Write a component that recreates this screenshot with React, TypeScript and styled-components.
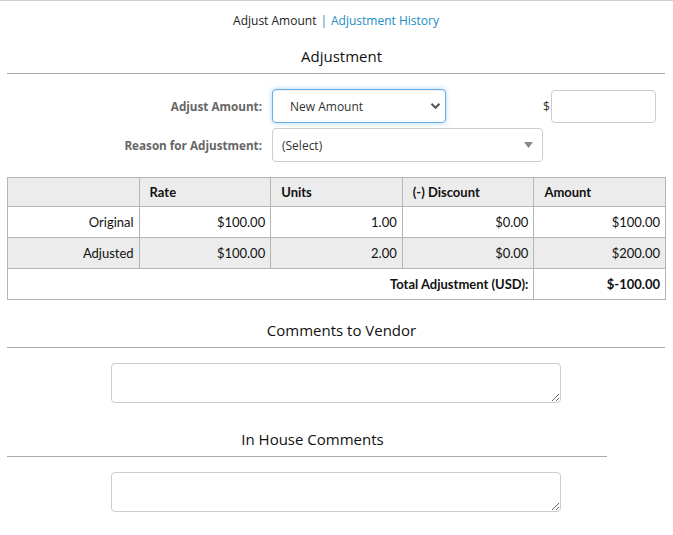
import React from "react";
import styled, { createGlobalStyle } from "styled-components";

const Global = createGlobalStyle`
  html, body { margin: 0; padding: 0; background: #fff; }
  body { font-family: "Open Sans", "Noto Sans", sans-serif; color: #222; }
  * { box-sizing: border-box; }
`;

const Page = styled.div`
  border-top: 1px solid #d0d0d0;
  padding: 0 8px 20px 7px;
`;

const Nav = styled.div`
  padding-top: 10px;
  line-height: 20px;
  font-size: 12px;
  text-align: center;
  color: #222;
`;

const NavLink = styled.a<{ $active?: boolean }>`
  color: ${(p) => (p.$active ? "#222" : "#1b8dc4")};
  text-decoration: none;
`;

const Sep = styled.span`
  color: #1b8dc4;
  margin: 0 4px;
`;

const SectionHeading = styled.div<{ $width?: number; $top: number }>`
  width: ${(p) => (p.$width ? `${p.$width}px` : "100%")};
  margin-top: ${(p) => p.$top}px;
  padding: 0 0 6px 11px;
  border-bottom: 1px solid #aaa;
  text-align: center;
  font-size: 15px;
  line-height: 22px;
  color: #111;
`;

const Form = styled.div`
  margin-top: 15px;
  display: grid;
  grid-template-columns: 255px 1fr;
  column-gap: 10px;
  row-gap: 5px;
  align-items: center;
`;

const Label = styled.label`
  text-align: right;
  font-size: 11.7px;
  font-weight: 700;
  color: #666;
`;

const Controls = styled.div`
  display: flex;
  align-items: center;
`;

const SelectWrap = styled.div<{ $width: number }>`
  position: relative;
  width: ${(p) => p.$width}px;
  height: 34px;
`;

const NativeSelect = styled.select<{ $focused?: boolean; $pad: number }>`
  appearance: none;
  -webkit-appearance: none;
  width: 100%;
  height: 100%;
  padding: 0 24px 0 ${(p) => p.$pad}px;
  font-family: "Open Sans", "Noto Sans", sans-serif;
  font-size: 12px;
  color: #333;
  background: #fff;
  border-radius: 4px;
  outline: none;
  border: 1px solid ${(p) => (p.$focused ? "#66afe9" : "#ccc")};
  box-shadow: ${(p) =>
    p.$focused
      ? "inset 0 1px 1px rgba(0,0,0,.075), 0 0 5px rgba(102,175,233,.55)"
      : "none"};
`;

const Arrow = styled.span<{ $right: number }>`
  position: absolute;
  right: ${(p) => p.$right}px;
  top: 50%;
  transform: translateY(-50%);
  display: flex;
  pointer-events: none;
`;

const Dollar = styled.span`
  margin-left: 97px;
  font-size: 12px;
  color: #333;
  width: 8px;
`;

const AmountInput = styled.input`
  width: 105px;
  height: 33px;
  border: 1px solid #ccc;
  border-radius: 4px;
  outline: none;
`;

const Table = styled.table`
  margin-top: 15px;
  width: 659px;
  border-collapse: collapse;
  table-layout: fixed;
  font-family: Lato, "Carlito", sans-serif;
  font-size: 13px;
  color: #111;
`;

const Th = styled.th`
  height: 29px;
  border: 1px solid #b5b5b5;
  background: #ececec;
  text-align: left;
  padding: 0 10px 1px;
  font-weight: 700;
`;

const Tr = styled.tr<{ $shaded?: boolean }>`
  background: ${(p) => (p.$shaded ? "#ececec" : "#fff")};
`;

const Td = styled.td<{ $bold?: boolean }>`
  height: 31px;
  border: 1px solid #b5b5b5;
  text-align: right;
  padding: 0 5px;
  font-weight: ${(p) => (p.$bold ? 700 : 400)};
`;

const Center = styled.div`
  display: flex;
  justify-content: center;
  width: 657px;
`;

const TextArea = styled.textarea`
  margin-top: 15px;
  width: 450px;
  height: 40px;
  border: 1px solid #ccc;
  border-radius: 4px;
  outline: none;
  font-family: inherit;
`;

const Chevron = () => (
  <svg width="11" height="8" viewBox="0 0 11 8">
    <path d="M1.5 1.8 L5.5 5.8 L9.5 1.8" fill="none" stroke="#555" strokeWidth="2" />
  </svg>
);

const Triangle = () => (
  <svg width="9" height="6" viewBox="0 0 9 6">
    <path d="M0 0 H9 L4.5 6 Z" fill="#888" />
  </svg>
);

const rows = [
  { label: "Original", rate: "$100.00", units: "1.00", discount: "$0.00", amount: "$100.00" },
  { label: "Adjusted", rate: "$100.00", units: "2.00", discount: "$0.00", amount: "$200.00" },
];

export default function App() {
  return (
    <Page>
      <Global />
      <Nav>
        <NavLink $active href="#">Adjust Amount</NavLink>
        <Sep>|</Sep>
        <NavLink href="#">Adjustment History</NavLink>
      </Nav>

      <SectionHeading $top={14}>Adjustment</SectionHeading>

      <Form>
        <Label>Adjust Amount:</Label>
        <Controls>
          <SelectWrap $width={174}>
            <NativeSelect $focused $pad={17} defaultValue="new">
              <option value="new">New Amount</option>
            </NativeSelect>
            <Arrow $right={5}><Chevron /></Arrow>
          </SelectWrap>
          <Dollar>$</Dollar>
          <AmountInput />
        </Controls>

        <Label>Reason for Adjustment:</Label>
        <Controls>
          <SelectWrap $width={271}>
            <NativeSelect $pad={9} defaultValue="">
              <option value="">(Select)</option>
            </NativeSelect>
            <Arrow $right={10}><Triangle /></Arrow>
          </SelectWrap>
        </Controls>
      </Form>

      <Table>
        <thead>
          <tr>
            <Th></Th>
            <Th>Rate</Th>
            <Th>Units</Th>
            <Th>(-) Discount</Th>
            <Th>Amount</Th>
          </tr>
        </thead>
        <tbody>
          {rows.map((r, i) => (
            <Tr key={r.label} $shaded={i === 1}>
              <Td>{r.label}</Td>
              <Td>{r.rate}</Td>
              <Td>{r.units}</Td>
              <Td>{r.discount}</Td>
              <Td>{r.amount}</Td>
            </Tr>
          ))}
          <Tr>
            <Td colSpan={4} $bold>Total Adjustment (USD):</Td>
            <Td $bold>$-100.00</Td>
          </Tr>
        </tbody>
      </Table>

      <SectionHeading $top={19}>Comments to Vendor</SectionHeading>
      <Center>
        <TextArea />
      </Center>

      <SectionHeading $top={25} $width={600}>In House Comments</SectionHeading>
      <Center>
        <TextArea />
      </Center>
    </Page>
  );
}
